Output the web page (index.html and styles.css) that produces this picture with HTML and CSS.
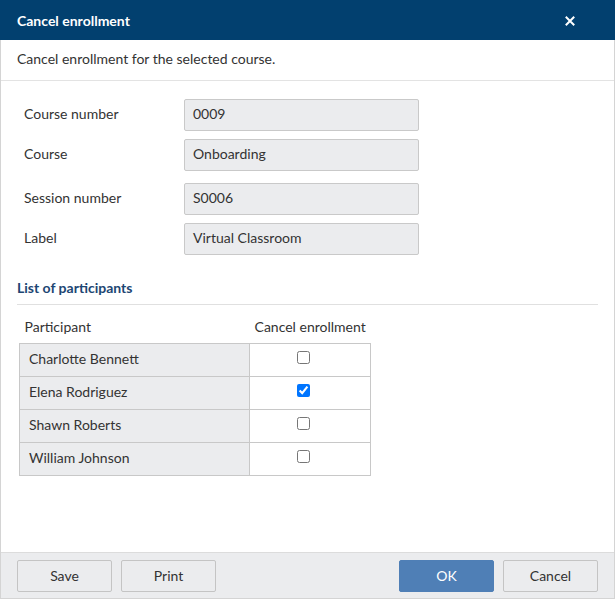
FILE: index.html
```html
<!DOCTYPE html>
<html lang="en">
<head>
<meta charset="utf-8">
<title>Cancel enrollment</title>
<link rel="stylesheet" href="styles.css">
</head>
<body>
<div class="dialog">
  <header class="titlebar">
    <span class="title">Cancel enrollment</span>
    <button class="close" aria-label="Close">
      <svg width="10" height="10" viewBox="0 0 10 10"><path d="M1.5 1.5 L8.5 8.5 M8.5 1.5 L1.5 8.5" stroke="#fff" stroke-width="2" stroke-linecap="square"/></svg>
    </button>
  </header>
  <div class="desc">Cancel enrollment for the selected course.</div>
  <main class="body">
    <div class="form">
      <div class="group">
        <div class="row"><label>Course number</label><div class="field">0009</div></div>
        <div class="row"><label>Course</label><div class="field">Onboarding</div></div>
      </div>
      <div class="group">
        <div class="row"><label>Session number</label><div class="field">S0006</div></div>
        <div class="row"><label>Label</label><div class="field">Virtual Classroom</div></div>
      </div>
    </div>
    <section class="participants">
      <h2 class="section-title">List of participants</h2>
      <table class="grid">
        <colgroup><col class="c1"><col class="c2"></colgroup>
        <thead>
          <tr><th class="th-name">Participant</th><th class="th-check">Cancel enrollment</th></tr>
        </thead>
        <tbody>
          <tr><td class="name">Charlotte Bennett</td><td class="check"><input type="checkbox"></td></tr>
          <tr><td class="name">Elena Rodriguez</td><td class="check"><input type="checkbox" checked></td></tr>
          <tr><td class="name">Shawn Roberts</td><td class="check"><input type="checkbox"></td></tr>
          <tr><td class="name">William Johnson</td><td class="check"><input type="checkbox"></td></tr>
        </tbody>
      </table>
    </section>
  </main>
  <footer class="footer">
    <div class="btns">
      <button class="btn">Save</button>
      <button class="btn">Print</button>
    </div>
    <div class="btns">
      <button class="btn primary">OK</button>
      <button class="btn">Cancel</button>
    </div>
  </footer>
</div>
</body>
</html>
```
FILE: styles.css
```css
html, body {
  margin: 0;
  padding: 0;
}
body {
  font-family: "Lato", "Noto Sans", "Liberation Sans", sans-serif;
  font-size: 14px;
  color: #333;
  background: #fff;
}
.dialog {
  width: 615px;
  height: 599px;
  box-sizing: border-box;
  border: 1px solid #d4d4d4;
  border-top: 0;
  display: flex;
  flex-direction: column;
}
.titlebar {
  height: 40px;
  margin: 0 -1px;
  background: #02406f;
  display: flex;
  align-items: center;
  justify-content: space-between;
  padding: 0 16px 0 17px;
  flex-shrink: 0;
}
.title {
  color: #fff;
  font-weight: 700;
  font-size: 14px;
}
.close {
  background: none;
  border: 0;
  padding: 0;
  width: 10px;
  height: 10px;
  display: flex;
  margin-right: 24px;
  margin-top: 1px;
}
.desc {
  height: 40px;
  flex-shrink: 0;
  border-bottom: 1px solid #e3e3e3;
  padding-left: 16px;
  line-height: 37px;
}
.body {
  flex: 1;
  padding: 18px 16px 0;
}
.form {
  padding-left: 7px;
  display: flex;
  flex-direction: column;
  gap: 12px;
}
.group {
  display: flex;
  flex-direction: column;
  gap: 8px;
}
.row {
  display: grid;
  grid-template-columns: 160px 235px;
  align-items: center;
}
.row label {
  padding-bottom: 3px;
}
.field {
  box-sizing: border-box;
  height: 32px;
  background: #ebecee;
  border: 1px solid #c9c9c9;
  border-radius: 2px;
  padding: 0 0 3px 8px;
  display: flex;
  align-items: center;
}
.section-title {
  margin: 24px 0 0;
  font-size: 14px;
  font-weight: 700;
  color: #1d4673;
  line-height: 18px;
  padding-bottom: 7px;
  border-bottom: 1px solid #e0e0e0;
}
.grid {
  margin: 12px 0 0 2px;
  border-collapse: collapse;
  width: 352px;
}
.c1 { width: 231px; }
.c2 { width: 121px; }
.grid th {
  font-weight: 400;
  line-height: 20px;
  padding: 0 0 6px;
  text-align: left;
}
.grid .th-name { padding-left: 5px; }
.grid .th-check { text-align: center; }
.grid td {
  border: 1px solid #c8c8c8;
  height: 33px;
  padding: 0 0 4px;
  box-sizing: border-box;
}
.grid td.name {
  background: #ebecee;
  padding-left: 9px;
}
.grid td.check {
  text-align: center;
  padding-right: 14px;
  padding-bottom: 8px;
}
.check input {
  margin: 0;
  vertical-align: middle;
}
.footer {
  flex-shrink: 0;
  background: #ebecee;
  border-top: 1px solid #dcdcdc;
  padding: 7px 16px 6px;
  display: flex;
  justify-content: space-between;
}
.btns {
  display: flex;
  gap: 9px;
}
.btn {
  width: 95px;
  height: 32px;
  box-sizing: border-box;
  background: #ebecee;
  border: 1px solid #c4c4c4;
  border-radius: 2px;
  font-family: inherit;
  font-size: 14px;
  color: #333;
  padding: 0 0 2px;
}
.btn.primary {
  background: #4f7fb6;
  border-color: #4f7fb6;
  color: #fff;
}
```
